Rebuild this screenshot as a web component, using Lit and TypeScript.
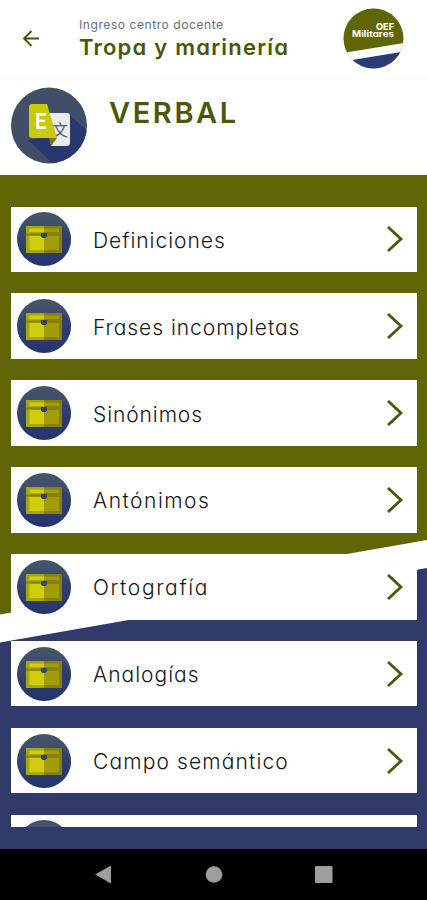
import { LitElement, html, css } from "lit";
import { customElement } from "lit/decorators.js";

const TOPICS: { label: string; tracking: number }[] = [
  { label: "Definiciones", tracking: 0.97 },
  { label: "Frases incompletas", tracking: 0.95 },
  { label: "Sinónimos", tracking: 0.9 },
  { label: "Antónimos", tracking: 1.5 },
  { label: "Ortografía", tracking: 1.65 },
  { label: "Analogías", tracking: 1 },
  { label: "Campo semántico", tracking: 1.13 },
  { label: "", tracking: 0 },
];

@customElement("app-root")
export class AppRoot extends LitElement {
  static styles = css`
    :host {
      display: flex;
      flex-direction: column;
      width: 427px;
      height: 900px;
      overflow: hidden;
      background: #fff;
      font-family: Inter, "Liberation Sans", sans-serif;
      font-feature-settings: "cv11" 1;
    }
    svg { display: block; flex: none; }
    .header {
      box-sizing: border-box;
      height: 78px;
      flex: none;
      display: flex;
      align-items: flex-start;
      padding: 8px 23px 0 22px;
      border-bottom: 1px solid #fafafa;
    }
    .back { margin-top: 21px; }
    .titles { margin: 9px 0 0 39px; flex: 1; white-space: nowrap; }
    .small { font-size: 12px; line-height: 15px; color: #666b80; letter-spacing: 0.58px; }
    .title { font-size: 22px; line-height: 30px; font-weight: 600; color: #4b5707; letter-spacing: 1.22px; }
    .brand { font-size: 9px; font-weight: 800; fill: #fff; text-anchor: end; }
    .brand-top { font-size: 8.5px; }
    .brand-bottom { font-size: 8.5px; font-weight: 700; }
    .section {
      height: 97px;
      flex: none;
      display: flex;
      align-items: flex-start;
      padding: 9px 0 0 11px;
      box-sizing: border-box;
    }
    .verbal {
      margin: 8px 0 0 22px;
      font-size: 29px;
      line-height: 36px;
      font-weight: 600;
      color: #4b5707;
      letter-spacing: 2.6px;
    }
    .e { font-size: 22px; font-weight: 600; fill: #fff; }
    .zh { font-size: 16px; font-family: "Noto Sans CJK SC", sans-serif; fill: #496276; }
    .body {
      height: 674px;
      flex: none;
      box-sizing: border-box;
      position: relative;
      padding: 31.5px 10px 22.5px 11px;
    }
    .backdrop { position: absolute; inset: 0; }
    .list {
      position: relative;
      height: 620px;
      overflow: hidden;
      display: flex;
      flex-direction: column;
      gap: 21.4px;
    }
    .card {
      height: 65.5px;
      flex: none;
      box-sizing: border-box;
      background: #fff;
      display: flex;
      align-items: center;
      padding: 0 13px 0 6px;
    }
    .label {
      flex: 1;
      margin-left: 22px;
      font-size: 21px;
      line-height: 28px;
      padding-top: 3px;
      font-weight: 300;
      color: #161616;
      white-space: nowrap;
    }
    .nav { flex: 1; background: #000; display: flex; justify-content: center; }
  `;

  private chest() {
    return html`<svg width="54" height="54" viewBox="0 0 54 54">
      <defs><linearGradient id="g" x2="0" y2="1"><stop stop-color="#475669" /><stop offset="1" stop-color="#24336f" /></linearGradient></defs>
      <circle cx="27" cy="27" r="27" fill="url(#g)" />
      <path d="M45 15 L54 24 A27 27 0 0 1 32 53.5 L10 41Z" fill="#29376d" opacity=".5" />
      <path d="M9 14H27V41H9Z" fill="#aaa50a" />
      <path d="M27 14H45V41H27Z" fill="#858207" />
      <path d="M12.500 16.500H27V20H12.500Z M12.500 24H27V38H12.500Z" fill="#cfcd0c" />
      <path d="M27 16.500H42V20H27Z M27 24H42V38H27Z" fill="#a19c08" />
      <path d="M9 21.500H45V23.500H9Z" fill="#858107" />
      <path d="M24 21H30V24.500L28.500 26H25.500L24 24.500Z" fill="#34446c" />
    </svg>`;
  }

  render() {
    return html`
      <div class="header">
        <svg class="back" width="18" height="18" viewBox="0 0 18 18">
          <path d="M17 9.500H2M9.500 2L2 9.500L9.500 17" fill="none" stroke="#465307" stroke-width="1.8" />
        </svg>
        <div class="titles">
          <div class="small">Ingreso centro docente</div>
          <div class="title">Tropa y marinería</div>
        </div>
        <svg width="61" height="61" viewBox="0 0 61 61">
          <defs><clipPath id="logo"><circle cx="30.500" cy="30.500" r="30" /></clipPath></defs>
          <g clip-path="url(#logo)">
            <rect width="61" height="61" fill="#606505" />
            <path d="M0 45L61 35V61H0Z" fill="#fff" />
            <path d="M0 53.500L61 43.500V61H0Z" fill="#293a78" />
          </g>
          <text class="brand brand-top" x="51" y="21.500" textLength="18" lengthAdjust="spacingAndGlyphs">OEF</text>
          <text class="brand brand-bottom" x="51" y="29.200" textLength="42" lengthAdjust="spacingAndGlyphs">Militares</text>
        </svg>
      </div>

      <div class="section">
        <svg width="76" height="77" viewBox="0 0 76 77">
          <defs><clipPath id="round"><circle cx="38" cy="38.500" r="38" /></clipPath></defs>
          <g clip-path="url(#round)">
            <rect width="76" height="77" fill="#414f66" />
            <path d="M17 53L42 77H76V44L58 27L40 50Z" fill="#29376f" />
          </g>
          <path d="M37 26H56Q59 26 59 29V56Q59 59 56 59H40Z" fill="#e9ebef" />
          <text class="zh" x="41" y="48.500" textLength="14">文</text>
          <path d="M38 51H46L40 59Z" fill="#76780a" />
          <path d="M21 17H36L46 51H21Q18 51 18 48V20Q18 17 21 17Z" fill="#c9ca0a" />
          <text class="e" x="24" y="42" textLength="12" lengthAdjust="spacingAndGlyphs">E</text>
        </svg>
        <div class="verbal">VERBAL</div>
      </div>

      <div class="body">
        <svg class="backdrop" width="427" height="674" viewBox="0 175 427 674">
          <rect y="175" width="427" height="674" fill="#606505" />
          <path d="M0 614.500L427 540V849H0Z" fill="#fff" />
          <path d="M0 642.500L427 568V849H0Z" fill="#303b6b" />
        </svg>
        <div class="list">
          ${TOPICS.map(
            (t) => html`<div class="card">
              ${this.chest()}
              <div class="label" style="letter-spacing:${t.tracking}px">${t.label}</div>
              <svg width="18" height="28" viewBox="0 0 18 28">
                <path d="M2 2L15 14L2 26" fill="none" stroke="#4b5707" stroke-width="2.8" />
              </svg>
            </div>`
          )}
        </div>
      </div>

      <div class="nav">
        <svg width="427" height="51" viewBox="0 0 427 51">
          <path d="M95 25.500L111 16.500V34.500Z" fill="#9e9e9e" />
          <circle cx="214" cy="25.500" r="8.300" fill="#9e9e9e" />
          <rect x="315" y="17" width="17.500" height="17" rx="1" fill="#9e9e9e" />
        </svg>
      </div>
    `;
  }
}
